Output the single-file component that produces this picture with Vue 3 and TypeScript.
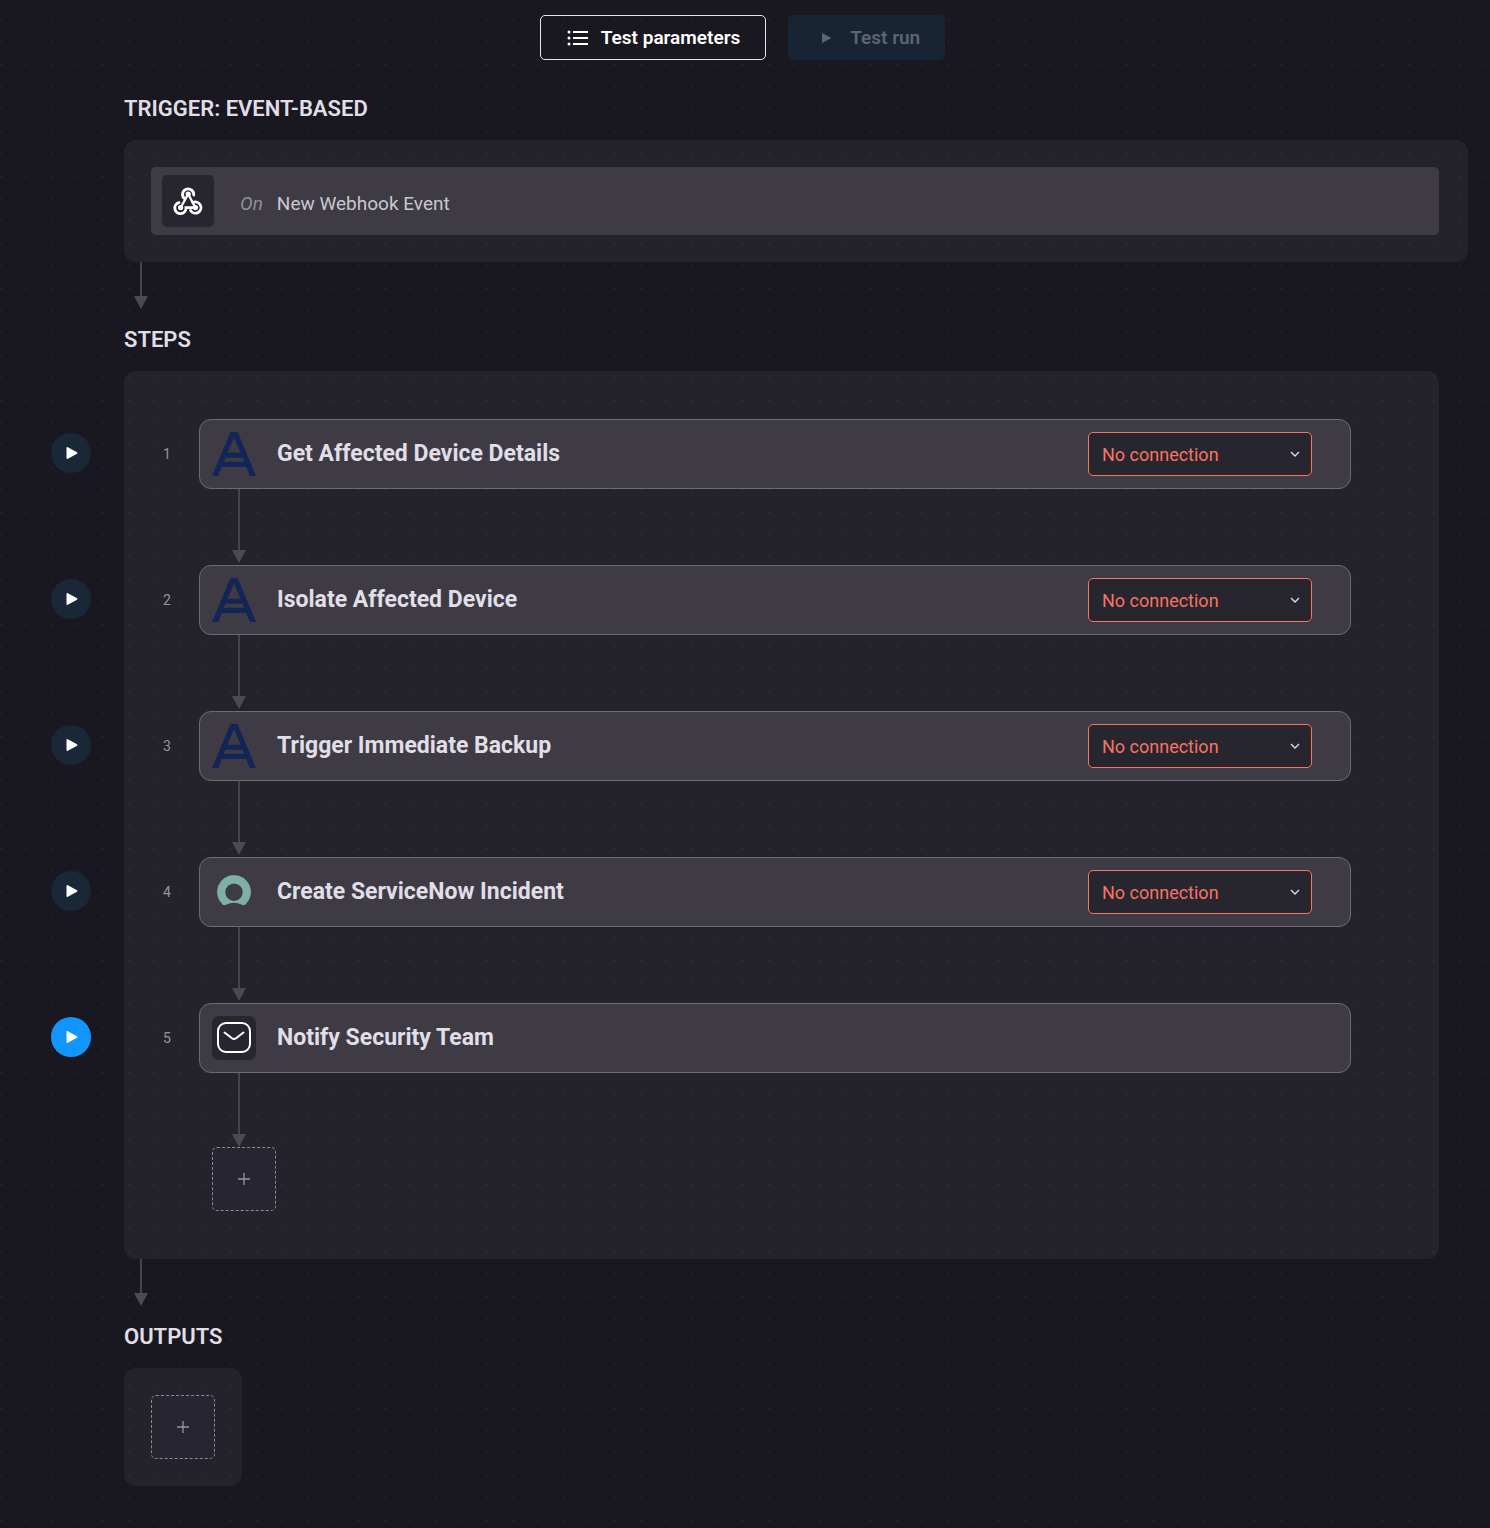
<script setup lang="ts">
import { ref } from 'vue'

type StepIcon = 'acronis' | 'servicenow' | 'mail'

interface Step {
  title: string
  icon: StepIcon
  needsConnection: boolean
}

const steps = ref<Step[]>([
  { title: 'Get Affected Device Details', icon: 'acronis', needsConnection: true },
  { title: 'Isolate Affected Device', icon: 'acronis', needsConnection: true },
  { title: 'Trigger Immediate Backup', icon: 'acronis', needsConnection: true },
  { title: 'Create ServiceNow Incident', icon: 'servicenow', needsConnection: true },
  { title: 'Notify Security Team', icon: 'mail', needsConnection: false },
])

// Dot positions inside one tile of the canvas grid
const dotColumns = [0, 25, 51, 76, 102]
const dotRows = [19, 41, 64, 86, 108]
</script>

<template>
  <div class="canvas">
    <svg class="dots" aria-hidden="true">
      <defs>
        <pattern id="dot-grid" width="128" height="112" patternUnits="userSpaceOnUse">
          <template v-for="y in dotRows" :key="y">
            <rect v-for="x in dotColumns" :key="x" :x="x" :y="y" width="2" height="1" fill="#292730" />
          </template>
        </pattern>
      </defs>
      <rect width="100%" height="100%" fill="url(#dot-grid)" />
    </svg>

    <header class="toolbar">
      <button type="button" class="btn btn-outline">
        <svg width="22" height="16" viewBox="0 0 22 16" fill="currentColor" aria-hidden="true">
          <circle cx="2" cy="2" r="1.5" /><circle cx="2" cy="8" r="1.5" /><circle cx="2" cy="14" r="1.5" />
          <path d="M6 1h15v2H6zM6 7h15v2H6zM6 13h15v2H6z" />
        </svg>
        Test parameters
      </button>
      <button type="button" class="btn btn-run" disabled>
        <svg width="11" height="12" viewBox="0 0 11 12" fill="currentColor" aria-hidden="true">
          <path d="M1 1v10L10.500 6z" />
        </svg>
        Test run
      </button>
    </header>

    <main class="flow">
      <section>
        <h2 class="heading">TRIGGER: EVENT-BASED</h2>
        <div class="panel trigger-panel">
          <div class="trigger">
            <span class="trigger-icon">
              <svg width="32" height="32" viewBox="0 0 32 32" fill="none" stroke="#fff" stroke-width="2.800" stroke-linecap="round" aria-hidden="true">
                <path d="M11.800 13A5.600 5.600 0 1 1 21.700 10" />
                <path d="M20.800 17.600A5.600 5.600 0 1 1 18.600 25.500" />
                <path d="M7 17.600A5.600 5.600 0 1 0 14 22.600H23" />
                <path d="M16.200 9 8.800 22.400M16.200 9l6.800 13" stroke-width="2.200" />
                <g fill="#fff" stroke="none"><circle cx="16.200" cy="9" r="2.600" /><circle cx="8.600" cy="22.600" r="2.600" /><circle cx="23.500" cy="22.600" r="2.600" /></g>
              </svg>
            </span>
            <em>On</em>
            <span class="trigger-name">New Webhook Event</span>
          </div>
        </div>
        <div class="arrow arrow-outer"></div>
      </section>

      <section>
        <h2 class="heading">STEPS</h2>
        <div class="panel steps-panel">
          <ol class="steps">
            <li v-for="(step, i) in steps" :key="step.title">
              <div class="step-row">
                <button type="button" class="play" :class="{ ready: !step.needsConnection }" :aria-label="`Run step ${i + 1}`">
                  <svg width="12" height="14" viewBox="0 0 12 14" fill="#fff" aria-hidden="true">
                    <path d="M.500 2Q.500 .600 1.800 1.200L11 6.200Q12 7 11 7.800L1.800 12.800Q.500 13.400 .500 12z" />
                  </svg>
                </button>
                <span class="number">{{ i + 1 }}</span>
                <div class="card">
                  <svg v-if="step.icon === 'acronis'" class="step-icon" viewBox="0 0 44 44" aria-hidden="true">
                    <path fill="#132456" d="M18.500 0h7L44 44h-6.200L34.200 35H9.800L6.200 44H0zM22 5.500 15.500 20.700h13zM13.500 25.700 11.700 29.700h20.600l-1.800-4z" fill-rule="evenodd" />
                  </svg>
                  <svg v-else-if="step.icon === 'servicenow'" class="step-icon" viewBox="0 0 44 44" aria-hidden="true">
                    <path fill="#7fb0a4" fill-rule="evenodd" d="M22 5A17 17 0 0 0 10.500 34.500Q12 35.800 14 34.800Q22 30.500 30 34.800Q32 35.800 33.500 34.500A17 17 0 0 0 22 5zM22 13.500a8.700 8.700 0 1 1 0 17.400a8.700 8.700 0 1 1 0-17.400z" />
                  </svg>
                  <svg v-else class="step-icon mail" viewBox="0 0 44 44" fill="none" stroke="#fff" stroke-width="2" stroke-linecap="round" stroke-linejoin="round" aria-hidden="true">
                    <rect x="6" y="7" width="32" height="29" rx="8" />
                    <path d="M12.500 16.500 20 22.300Q22 23.700 24 22.300L31.500 16.500" />
                  </svg>
                  <span class="title">{{ step.title }}</span>
                  <div v-if="step.needsConnection" class="select-wrap">
                    <select :aria-label="`Connection for ${step.title}`">
                      <option>No connection</option>
                    </select>
                    <svg width="10" height="6" viewBox="0 0 10 6" fill="none" stroke="#dddbe3" stroke-width="1.400" aria-hidden="true">
                      <path d="M1 1l4 4 4-4" />
                    </svg>
                  </div>
                </div>
              </div>
              <div class="arrow arrow-inner"></div>
            </li>
          </ol>
          <button type="button" class="add add-step" aria-label="Add step">
            <svg width="12" height="12" viewBox="0 0 12 12" stroke="currentColor" stroke-width="1.300" aria-hidden="true"><path d="M6 0v12M0 6h12" /></svg>
          </button>
        </div>
        <div class="arrow arrow-outer"></div>
      </section>

      <section>
        <h2 class="heading">OUTPUTS</h2>
        <div class="panel outputs-panel">
          <button type="button" class="add" aria-label="Add output">
            <svg width="12" height="12" viewBox="0 0 12 12" stroke="currentColor" stroke-width="1.300" aria-hidden="true"><path d="M6 0v12M0 6h12" /></svg>
          </button>
        </div>
      </section>
    </main>
  </div>
</template>

<style>
body {
  margin: 0;
  background: #19171f;
}
</style>

<style scoped>
.canvas {
  position: relative;
  box-sizing: border-box;
  min-height: 100vh;
  padding: 15px 22px 40px 124px;
  background: #19171f;
  color: #e0dee6;
  font-family: Roboto, "Liberation Sans", sans-serif;
}

.canvas *,
.canvas *::before,
.canvas *::after {
  box-sizing: border-box;
}

.dots {
  position: absolute;
  inset: 0;
  width: 100%;
  height: 100%;
}

.toolbar {
  position: relative;
  display: flex;
  justify-content: center;
  gap: 22px;
  margin-left: -107px;
}

.btn {
  display: flex;
  align-items: center;
  height: 45px;
  border: 1px solid transparent;
  border-radius: 5px;
  font: 600 19px/24px Roboto, "Liberation Sans", sans-serif;
}

.btn-outline {
  gap: 12px;
  padding: 0 25px 0 26px;
  border-color: #e6e4ec;
  background: transparent;
  color: #fff;
}

.btn-run {
  gap: 18px;
  padding: 0 24px 0 32px;
  background: #182333;
  color: #5d6573;
}

.flow {
  position: relative;
  padding-top: 35px;
}

.heading {
  margin: 0 0 17px;
  font-size: 22px;
  font-weight: 600;
  line-height: 28px;
}

.panel {
  border-radius: 12px;
  background: rgba(255, 255, 255, 0.05);
}

.trigger-panel {
  padding: 27px 29px 27px 27px;
}

.trigger {
  display: flex;
  align-items: center;
  height: 68px;
  padding-left: 11px;
  border-radius: 5px;
  background: #3e3b45;
  font-size: 19px;
  line-height: 24px;
  color: #c9c7d0;
}

.trigger em {
  margin: 5px 14px 0 26px;
  color: #918f99;
}

.trigger-name {
  margin-top: 5px;
}

.trigger-icon {
  display: grid;
  place-items: center;
  width: 52px;
  height: 52px;
  border-radius: 5px;
  background: #27252e;
}

.arrow {
  position: relative;
  width: 14px;
}

.arrow::before {
  content: "";
  position: absolute;
  top: 0;
  bottom: 12px;
  left: 6px;
  width: 2px;
  background: #44424b;
}

.arrow::after {
  content: "";
  position: absolute;
  bottom: 0;
  left: 0;
  width: 14px;
  height: 13px;
  background: #4b4952;
  clip-path: polygon(0 0, 100% 0, 50% 100%);
}

.arrow-outer {
  height: 47px;
  margin: 0 0 17px 10px;
}

.steps-panel {
  margin-right: 29px;
  padding: 48px 88px 48px 0;
}

.steps {
  margin: 0;
  padding: 0;
  list-style: none;
}

.step-row {
  display: flex;
  align-items: center;
  margin-left: -73px;
}

.play {
  display: grid;
  place-items: center;
  width: 40px;
  height: 40px;
  margin-bottom: 2px;
  padding: 0 0 0 2px;
  border: 0;
  border-radius: 50%;
  background: #1a2737;
}

.play.ready {
  background: #1296fd;
}

.number {
  width: 32px;
  margin: 0 16px 0 60px;
  font-size: 14px;
  line-height: 20px;
  text-align: center;
  color: #96949e;
}

.card {
  display: flex;
  flex: 1;
  align-items: center;
  height: 70px;
  padding: 0 38px 0 12px;
  border: 1px solid #6c6a74;
  border-radius: 12px;
  background: #3e3b45;
}

.step-icon {
  width: 44px;
  height: 44px;
}

.mail {
  border-radius: 7px;
  background: #27252e;
}

.title {
  flex: 1;
  margin-left: 21px;
  font-size: 23px;
  font-weight: 700;
  line-height: 28px;
}

.select-wrap {
  position: relative;
  width: 224px;
}

.select-wrap select {
  display: block;
  width: 100%;
  height: 44px;
  padding: 1px 32px 0 13px;
  border: 1px solid #f87462;
  border-radius: 5px;
  appearance: none;
  background: #27252e;
  color: #f87462;
  font: 400 18px/24px Roboto, "Liberation Sans", sans-serif;
}

.select-wrap svg {
  position: absolute;
  top: 19px;
  right: 12px;
  pointer-events: none;
}

.arrow-inner {
  height: 74px;
  margin: 0 0 2px 108px;
}

.steps li:last-child .arrow-inner {
  margin-bottom: 0;
}

.add {
  display: grid;
  place-items: center;
  width: 64px;
  height: 64px;
  padding: 0;
  border: 1px dashed #8b8993;
  border-radius: 5px;
  background: #27252f;
  color: #96949e;
}

.add-step {
  margin-left: 88px;
}

.outputs-panel {
  width: 118px;
  padding: 27px;
}
</style>
